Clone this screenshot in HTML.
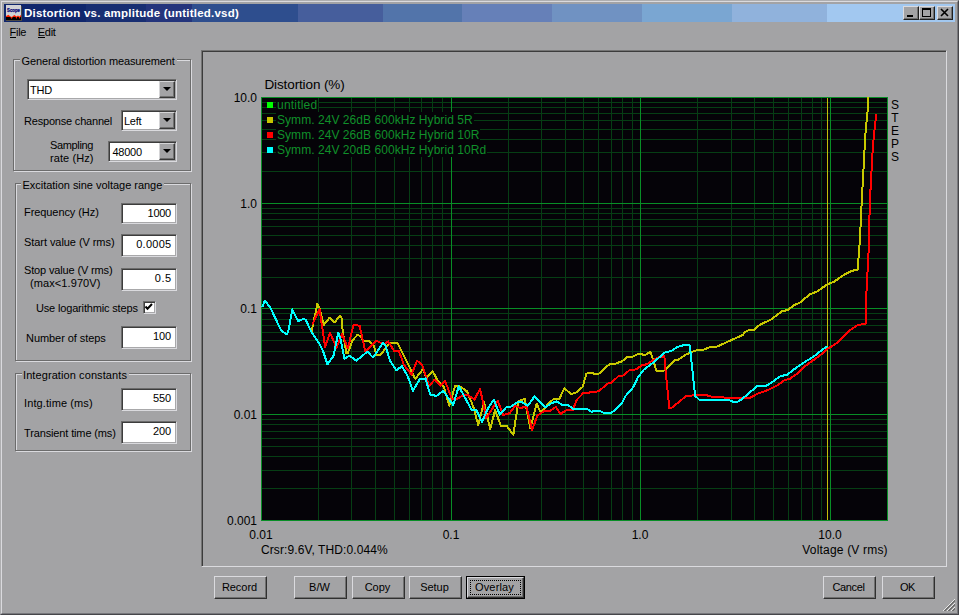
<!DOCTYPE html>
<html lang="en"><head><meta charset="utf-8"><title>Distortion vs. amplitude (untitled.vsd)</title>
<style>
*{box-sizing:border-box;margin:0;padding:0}
html,body{width:959px;height:615px;overflow:hidden;background:#a3a3a5}
body{position:relative;font-family:"Liberation Sans","DejaVu Sans",sans-serif;font-size:11px;color:#000;line-height:1}
.win{position:absolute;left:0;top:0;width:959px;height:615px;background:#a3a3a5;
 border-style:solid;border-width:1px;border-color:#aeaeb0 #46464a #46464a #aeaeb0}
.win:before{content:"";position:absolute;left:0;top:0;right:0;bottom:0;border-style:solid;border-width:1px;border-color:#dadade #78787c #78787c #dadade}
.title{position:absolute;left:4px;top:4px;width:951px;height:18px;
 background:linear-gradient(to right,#10266c 0,#10266c 82px,#182e72 82px,#182e72 142px,#24347c 142px,#24347c 188px,#2e4e8e 188px,#2e4e8e 294px,#465e9c 294px,#465e9c 379px,#5274aa 379px,#5274aa 458px,#6680b8 458px,#6680b8 548px,#7092c2 548px,#7092c2 638px,#7aa6d2 638px,#7aa6d2 728px,#90b2dc 728px,#90b2dc 823px,#a2c8f0 823px)}
.title .t{position:absolute;left:20px;top:2px;font-weight:bold;font-size:11.5px;color:#fff;white-space:nowrap;line-height:14px}
.ico{position:absolute;left:2px;top:1px;width:16px;height:16px}
.cb{position:absolute;top:2px;width:16px;height:14px;background:#a3a3a5;border-style:solid;border-width:1px;border-color:#dadade #202020 #202020 #dadade;box-shadow:inset -1px -1px 0 #707070}
.menu{position:absolute;top:26px;font-size:11px;line-height:13px;white-space:nowrap;letter-spacing:-0.3px}
.menu u{text-decoration:none;display:inline-block;height:12px;line-height:13px;border-bottom:1px solid #000}
.lbl{position:absolute;white-space:nowrap;font-size:11px;line-height:13px}
.grp{position:absolute;border:1px solid #6c6c6c;box-shadow:1px 1px 0 #dadade, inset 1px 1px 0 #dadade}
.grp>span{position:absolute;top:-5px;left:6px;background:#a3a3a5;padding:0 2px 0 1.5px;white-space:nowrap;font-size:11px;line-height:13px;height:12px}
.inp{position:absolute;background:#fff;border-style:solid;border-width:1px;border-color:#6c6c6c #dadade #dadade #6c6c6c;box-shadow:inset 1px 1px 0 #3c3c3c,inset -1px -1px 0 #a8a8aa;font-size:11px;line-height:13px;white-space:nowrap;text-align:right;padding:3px 6px 0 0;letter-spacing:-0.4px}
.sel{text-align:left;padding:4px 0 0 2px;letter-spacing:-0.25px}
.sel i{position:absolute;right:1px;top:1px;width:16px;bottom:1px;background:#a3a3a5;border-style:solid;border-width:1px;border-color:#d4d4d6 #383838 #383838 #d4d4d6;box-shadow:inset -1px -1px 0 #707070}
.sel i:after{content:"";position:absolute;left:3px;top:5px;border-style:solid;border-width:4px 4px 0 4px;border-color:#000 transparent transparent transparent}
.btn{position:absolute;top:576px;height:23px;background:#a3a3a5;border-style:solid;border-width:1px;border-color:#dadade #303030 #303030 #dadade;box-shadow:inset -1px -1px 0 #707070;text-align:center;font-size:11px;line-height:13px;padding:4px 2px 0 0;white-space:nowrap;letter-spacing:-0.15px}
.panel{position:absolute;left:201px;top:50px;width:746px;height:517px;border-style:solid;border-width:1px;border-color:#747474 #dadade #dadade #747474;box-shadow:inset 1px 1px 0 #3c3c3c}
.plot{position:absolute;left:261px;top:97px}
.ax{position:absolute;font-size:12px;line-height:14px;white-space:nowrap;color:#000}
.leg{position:absolute;left:276px;font-size:12px;line-height:14px;height:15px;white-space:nowrap;color:#10902a;background:#050308;padding:0 1px 0 1px}
.sq{position:absolute;left:267px;width:6px;height:6px}
</style></head>
<body>
<div class="win"></div>
<div class="title">
<svg class="ico" viewBox="0 0 16 16" shape-rendering="crispEdges">
<rect x="0" y="0" width="15" height="16" fill="#d2d2d6"/>
<rect x="15" y="1" width="1" height="15" fill="#4c4844"/>
<rect x="0" y="12" width="15" height="3" fill="#000"/>
<rect x="0" y="15" width="15" height="1" fill="#4c4844"/>
<path d="M0 12V11L1.2 10.4L2.3 9.7L3.3 10.5L4.5 11.6L6 12L7 11L8.3 9.9L9.5 10.8L10.5 11.6L11.3 11L12 10.4L13 11.2L13.6 11.6L14.5 10.2L15 10.2V12Z M4.3 12L5.6 13.9L6.8 12Z M9.6 12L10.4 13.9L11.2 12Z M12.7 12L13.5 13.9L14.3 12Z" fill="#ff2000" shape-rendering="auto"/>
<path d="M1 8.5H14" stroke="#b8d4e8" stroke-width="0.6" stroke-dasharray="1 1"/>
<text x="1" y="7" font-family="Liberation Sans, sans-serif" font-size="5.6" font-weight="bold" fill="#000070" stroke="#000070" stroke-width="0.25" textLength="13" lengthAdjust="spacingAndGlyphs" shape-rendering="auto">Scope</text>
</svg>
<div class="t" style="letter-spacing:0.221px">Distortion vs. amplitude (untitled.vsd)</div>
<div class="cb" style="left:899px"><svg width="14" height="12" style="position:absolute;left:0;top:0" shape-rendering="crispEdges"><rect x="3" y="8" width="6" height="2" fill="#000"/></svg></div>
<div class="cb" style="left:915px"><svg width="14" height="12" style="position:absolute;left:0;top:0" shape-rendering="crispEdges"><rect x="2.5" y="1.5" width="8" height="8" fill="none" stroke="#000"/><rect x="2" y="1" width="9" height="2" fill="#000"/></svg></div>
<div class="cb" style="left:933px"><svg width="14" height="12" style="position:absolute;left:0;top:0"><path d="M3 2 L10 9 M10 2 L3 9" stroke="#000" stroke-width="1.6" fill="none"/></svg></div>
</div>
<div class="menu" style="left:9.6px"><u>F</u>ile</div>
<div class="menu" style="left:37.8px"><u>E</u>dit</div>
<div class="grp" style="left:13px;top:59px;width:178px;height:112px"><span style="left:6px;letter-spacing:-0.131px">General distortion measurement</span></div>
<div class="inp sel" style="left:27px;top:79px;width:150px;height:21px">THD<i></i></div>
<div class="lbl" style="left:24px;top:115px;letter-spacing:-0.195px;">Response channel</div>
<div class="inp sel" style="left:121px;top:110px;width:56px;height:21px">Left<i></i></div>
<div class="lbl" style="left:50px;top:139px;letter-spacing:-0.357px;">Sampling</div>
<div class="lbl" style="left:50px;top:152px;letter-spacing:0.08px;">rate (Hz)</div>
<div class="inp sel" style="left:108px;top:141px;width:69px;height:21px"><span style="padding-left:1.5px">48000</span><i></i></div>
<div class="grp" style="left:15px;top:183px;width:176px;height:178px"><span style="left:5px;letter-spacing:-0.031px">Excitation sine voltage range</span></div>
<div class="lbl" style="left:24px;top:206px;letter-spacing:-0.075px;">Frequency (Hz)</div>
<div class="inp" style="left:121px;top:203px;width:56px;height:21px;letter-spacing:-0.296px;padding-right:5.10px">1000</div>
<div class="lbl" style="left:24px;top:236px;letter-spacing:-0.062px;">Start value (V rms)</div>
<div class="inp" style="left:121px;top:234px;width:56px;height:23px;letter-spacing:0.266px;padding-right:4.53px">0.0005</div>
<div class="lbl" style="left:24px;top:264px;letter-spacing:-0.144px;">Stop value (V rms)</div>
<div class="lbl" style="left:30px;top:277px;letter-spacing:0.091px;">(max&lt;1.970V)</div>
<div class="inp" style="left:121px;top:268px;width:56px;height:23px;letter-spacing:0.568px;padding-right:4.23px">0.5</div>
<div class="lbl" style="left:36px;top:302px;letter-spacing:-0.162px;">Use logarithmic steps</div>
<div style="position:absolute;left:143px;top:301px;width:13px;height:13px;background:#fff;border-style:solid;border-width:1px;border-color:#6c6c6c #dadade #dadade #6c6c6c;box-shadow:inset 1px 1px 0 #3c3c3c,inset -1px -1px 0 #a8a8aa"><svg width="10" height="10" style="position:absolute;left:0;top:0"><path d="M1.5 4.5 L3.5 6.8 L8 2" stroke="#000" stroke-width="2" fill="none"/></svg></div>
<div class="lbl" style="left:26px;top:332px;letter-spacing:-0.064px;">Number of steps</div>
<div class="inp" style="left:121px;top:326px;width:56px;height:23px;letter-spacing:-0.12px;padding-right:4.92px">100</div>
<div class="grp" style="left:15px;top:373px;width:176px;height:78px"><span style="left:5.5px;letter-spacing:0.089px">Integration constants</span></div>
<div class="lbl" style="left:24px;top:397px;letter-spacing:0.108px;">Intg.time (ms)</div>
<div class="inp" style="left:121px;top:388px;width:56px;height:23px;letter-spacing:-0.12px;padding-right:4.92px">550</div>
<div class="lbl" style="left:24px;top:427px;letter-spacing:-0.136px;">Transient time (ms)</div>
<div class="inp" style="left:121px;top:421px;width:56px;height:23px;letter-spacing:-0.12px;padding-right:4.92px">200</div>
<div class="panel"></div>
<svg class="plot" width="627" height="424" viewBox="261 97 627 424" shape-rendering="crispEdges">
<rect x="261" y="97" width="627" height="424" fill="#050308"/>
<path d="M318.5 97V521M351.5 97V521M375.5 97V521M394.5 97V521M409.5 97V521M421.5 97V521M432.5 97V521M442.5 97V521M508.5 97V521M541.5 97V521M565.5 97V521M583.5 97V521M598.5 97V521M611.5 97V521M622.5 97V521M632.5 97V521M697.5 97V521M731.5 97V521M754.5 97V521M773.5 97V521M788.5 97V521M801.5 97V521M812.5 97V521M821.5 97V521M261 488.5H888M261 470.5H888M261 456.5H888M261 446.5H888M261 438.5H888M261 431.5H888M261 424.5H888M261 419.5H888M261 382.5H888M261 364.5H888M261 351.5H888M261 340.5H888M261 332.5H888M261 325.5H888M261 319.5H888M261 313.5H888M261 277.5H888M261 258.5H888M261 245.5H888M261 235.5H888M261 226.5H888M261 219.5H888M261 213.5H888M261 208.5H888M261 171.5H888M261 152.5H888M261 139.5H888M261 129.5H888M261 120.5H888M261 113.5H888M261 107.5H888M261 102.5H888" stroke="#063e14" stroke-width="1" fill="none"/>
<path d="M261 414.5H888M261 308.5H888M261 203.5H888M451.5 97V521M640.5 97V521M830.5 97V521" stroke="#088e26" stroke-width="1" fill="none"/>
<path d="M827.5 97V521" stroke="#c6bc08" stroke-width="1" fill="none"/>
<rect x="261.5" y="97.5" width="626" height="423" fill="none" stroke="#088e26" stroke-width="1"/>
<path d="M311.5 332L317.4 303.8L319.5 308.2L323.7 325.1L329.6 317.6L334.6 322.3L340.2 315.7L341.5 317.6L342.7 331.4L346.4 353.5L348 352.7L352.7 340.1L357.8 334.5L360.3 336.4L363.4 340.8L369 341L374 346.4L376.4 354.8L380.8 354.8L387.7 345L390.2 342.8L397.7 343.1L415.2 378.8L422.8 369.4L426.5 377.6L432.6 371.3L437.5 380L443.8 386.9L449.4 405.7L455.1 385.7L458.8 385.7L467 391.3L473.2 406.4L478.3 425.2L483.9 402L490.2 428.9L495.2 410.1L500.8 425.8L507.1 426.4L513.3 434.9L518.4 401.3L524.6 398.8L530.3 428.3L536.7 403.8L540.2 411.4L542.5 410.8L548.2 403.9L553.8 398.9L559.4 398.6L564.4 388.2L570.7 393.9L575.1 393.2L582.6 387L586.4 373.8L590.1 372.6L594.5 373.8L600.2 373.4L604.5 368.2L610.2 364L615.8 363.5L622.1 361.3L627.1 357.3L633.4 356.5L638.4 353.8L645.3 355L650.2 351.9L651.9 355.7L656.3 370.7L663.8 370.7L668.2 367L673.8 360.7L678.8 359.4L685.1 355L690.7 352.5L697.6 349.8L703.3 349.8L710.2 346.9L716.4 346.9L730.2 340.6L742.7 335L745 332.2L748.4 330.2L753.4 330.2L760.1 324.6L771 319.6L781.9 311.2L787.7 310.1L793.6 305.4L800.3 302.4L809.5 294.5L817.9 291.1L827.1 284.4L833.8 281.9L844.7 274.4L851.4 271L858.1 269.4L858.6 256L859.8 241.7L860.5 227.8L861.7 202.2L862.9 180.2L864.1 158.3L865.1 137.6L866.3 124.1L867.6 110.7L867.8 97.3" stroke="#c8c800" stroke-width="2" fill="none" stroke-linejoin="round" stroke-linecap="round" shape-rendering="crispEdges"/>
<path d="M312.6 323.8L319.5 309.4L325.2 347L329.9 332.6L336.5 347.7L342.1 333.9L347.9 348.5L353.4 325.1L359.6 325.7L360.9 331.4L365.3 351.5L376.4 340.6L383.3 344.4L388.3 341.5L393.9 350.7L398.9 351L404 365.1L411.5 374.5L417.1 360.7L422.1 365.1L429.2 385.7L434.5 379.9L440.5 385.7L445 380.7L451.9 398.8L457 398.8L462.6 395.7L467.6 395.1L474.5 399.5L480.1 388.8L486.4 418.3L493.3 407L497.7 400.7L503.3 415.1L509.6 413.2L515.2 405.7L520.2 408.2L526.5 406.4L532.1 430.2L537.3 415.5L544.6 411L550 410.8L555.7 407L560.7 413.9L566.3 410.2L572.6 410.2L577 399.5L583.2 393.2L588.9 392.6L597.7 391.4L600.2 390.1L607.1 383.8L611.4 382.8L618.3 376.3L622.7 375.7L629.6 370.1L635.9 369.4L642.8 364.8L646.5 364.4L657.5 357.6L664.4 356.3L665.7 372.6L669.4 408.3L671.9 407.7L685.7 396.4L689.5 395.8L698.9 394.8L706.4 395.2L711.4 396.7L720.2 396.7L725.2 397.7L750.3 397.7L758.4 393.3L767.5 390.2L778.8 384.5L784.4 380.2L790.1 378.6L797 373.9L802.6 368.2L808.9 363.2L818.9 356.3L827.7 348.8L836.5 343.2L842.7 337.5L848.4 331.3L857.8 325L865.8 323.6L866 300.4L867.3 276.1L868.6 251.8L869 229L869.8 207.1L870.7 185.1L872 163.2L872.9 146.1L874.4 131.5L876.1 115.1" stroke="#ff0000" stroke-width="2" fill="none" stroke-linejoin="round" stroke-linecap="round" shape-rendering="crispEdges"/>
<path d="M262.5 306.5L263 305L264.8 300.7L270 307L281.3 330.7L286.6 334.1L288.2 332L292.3 309.4L298.2 321.1L303.9 318.6L305.8 320L311.4 332L320.2 345.2L322.7 350.2L327.5 364.4L333.2 356.3L334 354L338.3 332.6L340.2 337.6L344.5 358.6L349.5 355.7L356.4 360.7L367.4 351.6L373 357.6L382.7 343.1L385.2 345L390.2 361.3L396.4 370.1L402.1 366.3L407.7 376.3L413 390.8L419.6 379.5L425.5 378.5L430.2 394.5L436.5 396L443.2 390.7L453.2 405.1L458.8 386.3L471.4 409.5L476.4 410.1L482 422L488.3 407.6L493.9 399.8L499.6 414.5L506.5 407L511.5 406.4L517.7 402L521.5 402L527.8 405.7L534.6 396.3L545.5 407.2L551.3 403.3L556.9 401.4L561.9 404.8L567.6 404.8L573.2 408.9L587 408.9L591.4 411.8L595.2 410.8L599.5 411L604.5 413L610.8 413L615.2 410.2L621.5 403.9L625.2 396.4L633.4 387L637.8 377.6L643.4 370.1L653.1 362.6L665 352.5L671.9 350.7L677.6 346.9L685.1 344.8L689.5 344.8L690.7 353.8L695.1 395.8L699.5 399.9L729 399.9L733.3 402L737.1 402L741.5 399.5L757.5 385.8L766.3 385.8L771.3 382.7L780.1 376.4L787.6 374.5L793.8 369.5L803.9 362.6L813.9 356.3L822.7 349.4L826.7 346.6" stroke="#00ffff" stroke-width="2" fill="none" stroke-linejoin="round" stroke-linecap="round" shape-rendering="crispEdges"/>
</svg>
<div class="ax" style="left:264.5px;top:77px;font-size:13.5px;line-height:16px;letter-spacing:-0.126px">Distortion (%)</div>
<div class="ax" style="right:702px;top:91px;text-align:right">10.0</div>
<div class="ax" style="right:702px;top:197px;text-align:right">1.0</div>
<div class="ax" style="right:702px;top:302px;text-align:right">0.1</div>
<div class="ax" style="right:702px;top:408px;text-align:right">0.01</div>
<div class="ax" style="right:702px;top:514px;text-align:right">0.001</div>
<div class="ax" style="left:231px;width:60px;top:528px;text-align:center">0.01</div>
<div class="ax" style="left:421px;width:60px;top:528px;text-align:center">0.1</div>
<div class="ax" style="left:610px;width:60px;top:528px;text-align:center">1.0</div>
<div class="ax" style="left:800px;width:60px;top:528px;text-align:center">10.0</div>
<div class="ax" style="left:802.3px;top:543px;letter-spacing:0.186px">Voltage (V rms)</div>
<div class="ax" style="left:261px;top:543px;letter-spacing:0.096px">Crsr:9.6V, THD:0.044%</div>
<div class="ax" style="left:890px;width:10px;text-align:center;top:98px">S</div>
<div class="ax" style="left:890px;width:10px;text-align:center;top:111px">T</div>
<div class="ax" style="left:890px;width:10px;text-align:center;top:124px">E</div>
<div class="ax" style="left:890px;width:10px;text-align:center;top:137px">P</div>
<div class="ax" style="left:890px;width:10px;text-align:center;top:150px">S</div>
<div class="leg" style="top:98px;height:14px;letter-spacing:0.212px">untitled</div>
<div class="sq" style="top:102px;background:#00ff00"></div>
<div class="leg" style="top:112px;padding-top:1px;letter-spacing:0.052px">Symm. 24V 26dB 600kHz Hybrid 5R</div>
<div class="sq" style="top:117px;background:#c8c400"></div>
<div class="leg" style="top:127px;padding-top:1px;letter-spacing:0.052px">Symm. 24V 26dB 600kHz Hybrid 10R</div>
<div class="sq" style="top:132px;background:#ff0000"></div>
<div class="leg" style="top:142px;padding-top:1px;letter-spacing:0.052px">Symm. 24V 20dB 600kHz Hybrid 10Rd</div>
<div class="sq" style="top:147px;background:#00ffff"></div>
<div class="btn" style="left:214px;width:53px;letter-spacing:-0.045px;">Record</div>
<div class="btn" style="left:294px;width:53px;letter-spacing:0.073px;">B/W</div>
<div class="btn" style="left:352px;width:53px;letter-spacing:-0.022px;">Copy</div>
<div class="btn" style="left:409px;width:53px;letter-spacing:-0.05px;">Setup</div>
<div style="position:absolute;left:466px;top:576px;width:59px;height:23px;background:#000"></div>
<div class="btn" style="left:467px;top:577px;width:57px;height:21px;padding-top:3px;letter-spacing:0.156px">Overlay<b style="position:absolute;left:2px;top:2px;right:2px;bottom:2px;border:1px dotted #000"></b></div>
<div class="btn" style="left:823px;width:53px;letter-spacing:-0.342px;">Cancel</div>
<div class="btn" style="left:882px;width:53px;letter-spacing:-0.553px;">OK</div>
<svg style="position:absolute;left:942px;top:598px" width="14" height="14"><path d="M1 13L13 1M5 13L13 5M9 13L13 9" stroke="#e8e8e8" stroke-width="1"/><path d="M2 13L13 2M3 13L13 3M6 13L13 6M7 13L13 7M10 13L13 10M11 13L13 11" stroke="#707070" stroke-width="1"/></svg>
</body></html>
